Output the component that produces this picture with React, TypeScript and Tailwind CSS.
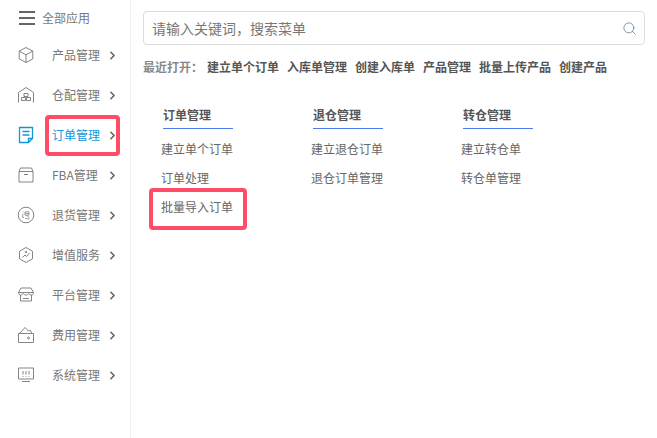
import { ChevronRight, Search } from "lucide-react";
import type { ReactNode } from "react";

const iconProps = {
  width: 18,
  height: 18,
  viewBox: "0 0 18 18",
  fill: "none",
  stroke: "#777",
  strokeWidth: 0.9,
};

const icons: Record<string, ReactNode> = {
  box: (
    <svg {...iconProps}>
      <path d="M9 1.500l6.800 3.600v7.800L9 16.500l-6.800-3.600V5.100z" />
      <path d="M2.200 5.100L9 8.800l6.800-3.700M9 8.800v7.700" />
    </svg>
  ),
  warehouse: (
    <svg {...iconProps}>
      <path d="M1.500 16.500V6.500L9 1.500l7.500 5v10" />
      <path d="M7 7.500h4v3H7zM4.500 11.500h4v3h-4zM9.500 11.500h4v3h-4z" />
    </svg>
  ),
  order: (
    <svg {...iconProps} stroke="#1296db" strokeWidth={1.3}>
      <path d="M2.500 1.500h13v11l-4 4h-9z" />
      <path d="M11.500 16.500v-4h4M5.500 5.500h7M5.500 9h7" />
    </svg>
  ),
  fba: (
    <svg {...iconProps}>
      <path d="M2 5.500l1.500-3.500h11L16 5.500V16H2z" />
      <path d="M2 5.500h14M7 8.500h4" />
    </svg>
  ),
  refund: (
    <svg {...iconProps}>
      <circle cx="9" cy="9" r="7.800" />
      <path d="M5.800 5.500l1 1M5.800 8v4l1-.7M8 5.800h4v3.400H8zM8 7.500h4M8 12.500l4.500.3M9.500 9.500l3 2.200" strokeWidth={0.7} />
    </svg>
  ),
  service: (
    <svg {...iconProps}>
      <path d="M9 1.500l6.500 3.700v7.600L9 16.500l-6.500-3.700V5.200z" />
      <path d="M5.500 11.500L8 9l1.500 1.500L12.500 7" />
      <circle cx="9" cy="6" r="0.800" />
    </svg>
  ),
  store: (
    <svg {...iconProps}>
      <path d="M4 2h10l2.500 4.500c0 1.500-1 2.500-2.300 2.500S12 8.200 11.700 7.500C11.200 8.500 10 9 9 9s-2.200-.5-2.700-1.500C6 8.200 5.100 9 3.800 9S1.500 8 1.500 6.500z" />
      <path d="M3.500 9v6h11V9M1.500 6.500h15M6 12.500h6" />
    </svg>
  ),
  wallet: (
    <svg {...iconProps}>
      <path d="M1.500 7.500h15v9h-15z" />
      <path d="M2.500 7.500L8 1.500l3.500 3.500 1.500-1 2 3.500" />
      <circle cx="11.500" cy="12" r="1" />
    </svg>
  ),
  monitor: (
    <svg {...iconProps}>
      <path d="M1.500 2h15v11h-15zM5 15.500h8" />
      <path d="M6 5v3.500M9 5v3.500M12 5v3.500M6 10v.8M9 10v.8M12 10v.8" />
    </svg>
  ),
};

const menu = [
  { icon: "box", label: "产品管理" },
  { icon: "warehouse", label: "仓配管理" },
  { icon: "order", label: "订单管理", active: true },
  { icon: "fba", label: "FBA管理" },
  { icon: "refund", label: "退货管理" },
  { icon: "service", label: "增值服务" },
  { icon: "store", label: "平台管理" },
  { icon: "wallet", label: "费用管理" },
  { icon: "monitor", label: "系统管理" },
];

const recent = ["建立单个订单", "入库单管理", "创建入库单", "产品管理", "批量上传产品", "创建产品"];

const groups = [
  { title: "订单管理", items: ["建立单个订单", "订单处理", "批量导入订单"] },
  { title: "退仓管理", items: ["建立退仓订单", "退仓订单管理"] },
  { title: "转仓管理", items: ["建立转仓单", "转仓单管理"] },
];

export default function App() {
  return (
    <div className="relative flex h-[438px] w-[657px] overflow-hidden bg-white text-xs text-[#666] font-['Noto_Sans_CJK_SC','Noto_Sans',sans-serif]">
      <aside className="h-full w-[131px] shrink-0 border-r border-[#f0f0f0] pt-[9px]">
        <div className="flex h-[18px] items-center pl-[19px] text-[#777]">
          <div className="flex w-[16px] flex-col gap-1">
            <span className="h-0.5 bg-[#666]" />
            <span className="h-0.5 bg-[#666]" />
            <span className="h-0.5 bg-[#666]" />
          </div>
          <span className="ml-[7px]">全部应用</span>
        </div>
        <nav className="mt-[8px]">
          {menu.map((m) => (
            <div key={m.label} className="flex h-10 items-center pl-[17px]">
              <span className="flex w-[35px] shrink-0">{icons[m.icon]}</span>
              <span className={`w-[54px] whitespace-nowrap ${m.active ? "text-[#1296db]" : "text-[#777]"}`}>{m.label}</span>
              <ChevronRight size={13} strokeWidth={3} className="text-[#666]" />
            </div>
          ))}
        </nav>
      </aside>

      <main className="flex-1 pl-3 pr-3 pt-[11px]">
        <div className="flex h-[34px] items-center justify-between rounded border border-[#ddd] pl-2 pr-[7px]">
          <span className="text-sm text-[#777]">请输入关键词，搜索菜单</span>
          <Search size={15} strokeWidth={1.2} className="text-[#5a7a99]" />
        </div>
        <div className="mt-[13px] flex h-[18px] items-center whitespace-nowrap font-bold">
          <span className="mr-1 text-[#888]">最近打开：</span>
          <div className="flex gap-2 text-[#555]">
            {recent.map((r) => (
              <span key={r}>{r}</span>
            ))}
          </div>
        </div>
        <div className="mt-[30px] flex pl-5">
          {groups.map((g) => (
            <div key={g.title} className="w-[150px]">
              <div className="h-[23px] w-[70px] border-b border-[#4b7bec] font-bold leading-[18px] text-[#555]">{g.title}</div>
              <ul className="-ml-0.5 mt-[5px]">
                {g.items.map((i) => (
                  <li key={i} className="flex h-[29px] items-center">{i}</li>
                ))}
              </ul>
            </div>
          ))}
        </div>
      </main>

      <div className="absolute left-[45px] top-[115px] h-[41px] w-[75px] rounded border-4 border-[#ff4d67]" />
      <div className="absolute left-[149px] top-[188px] h-[42px] w-[98px] rounded border-4 border-[#ff4d67]" />
    </div>
  );
}
